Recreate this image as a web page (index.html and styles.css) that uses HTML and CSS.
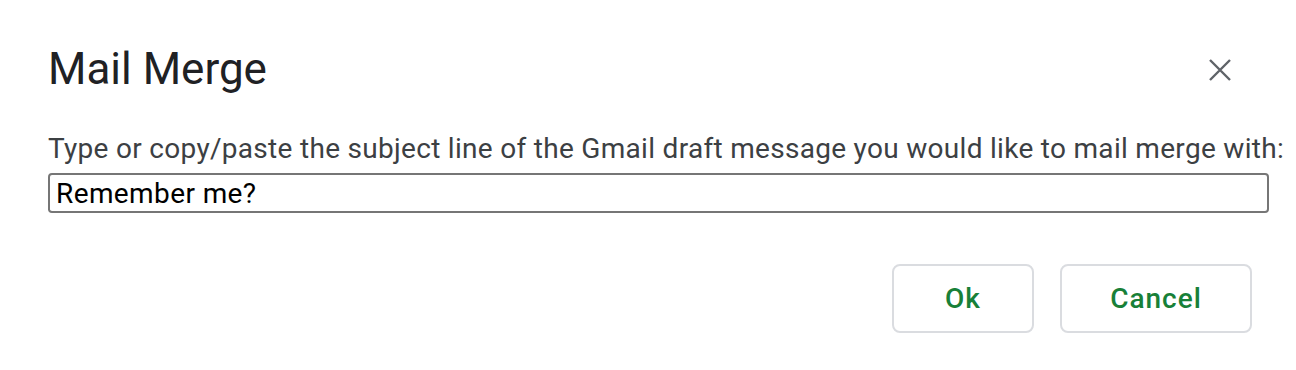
FILE: index.html
```html
<!DOCTYPE html>
<html>
<head>
<meta charset="utf-8">
<link rel="stylesheet" href="styles.css">
</head>
<body>
<div class="dialog">
  <div class="header">
    <h1 class="title">Mail Merge</h1>
    <button class="close" aria-label="Close">
      <svg width="24" height="24" viewBox="0 0 24 24"><path d="M2 2 L22 22 M22 2 L2 22" stroke="#5f6368" stroke-width="2.4" fill="none"/></svg>
    </button>
  </div>
  <label class="label" for="subj">Type or copy/paste the subject line of the Gmail draft message you would like to mail merge with:</label>
  <input id="subj" class="field" type="text" value="Remember me?">
  <div class="actions">
    <button class="btn btn-ok">Ok</button>
    <button class="btn btn-cancel">Cancel</button>
  </div>
</div>
</body>
</html>
```
FILE: styles.css
```css
html, body {
  margin: 0;
  padding: 0;
  background: #ffffff;
}
.dialog {
  padding: 0 28px 0 48px;
  font-family: Roboto, "Noto Sans", Arial, sans-serif;
}
.header {
  display: flex;
  align-items: flex-start;
  justify-content: space-between;
  padding-top: 43px;
}
.title {
  margin: 0;
  font-size: 44px;
  font-weight: 400;
  color: #202124;
  line-height: 52px;
}
.close {
  border: none;
  background: none;
  padding: 0;
  width: 24px;
  height: 24px;
  margin-right: 36px;
  margin-top: 15px;
}
.close svg { display: block; }
.label {
  display: block;
  margin-top: 38px;
  font-size: 28px;
  line-height: 32px;
  letter-spacing: 0.3px;
  white-space: nowrap;
  color: #3c4043;
}
.field {
  display: block;
  box-sizing: border-box;
  width: 1221px;
  height: 40px;
  margin: 8px 0 0 0;
  padding: 0 6px;
  border: 2px solid #767676;
  border-radius: 4px;
  font-family: Roboto, Arial, sans-serif;
  font-size: 28px;
  letter-spacing: 0.4px;
  color: #000;
  outline: none;
}
.actions {
  display: flex;
  justify-content: flex-end;
  gap: 26px;
  margin-top: 51px;
  padding-right: 16px;
}
.btn {
  box-sizing: border-box;
  height: 69px;
  border: 2px solid #dadce0;
  border-radius: 8px;
  background: #fff;
  color: #188038;
  font-family: Roboto, Arial, sans-serif;
  font-size: 28px;
  font-weight: 500;
  letter-spacing: 1px;
}
.btn-ok { width: 142px; }
.btn-cancel { width: 192px; }
```
